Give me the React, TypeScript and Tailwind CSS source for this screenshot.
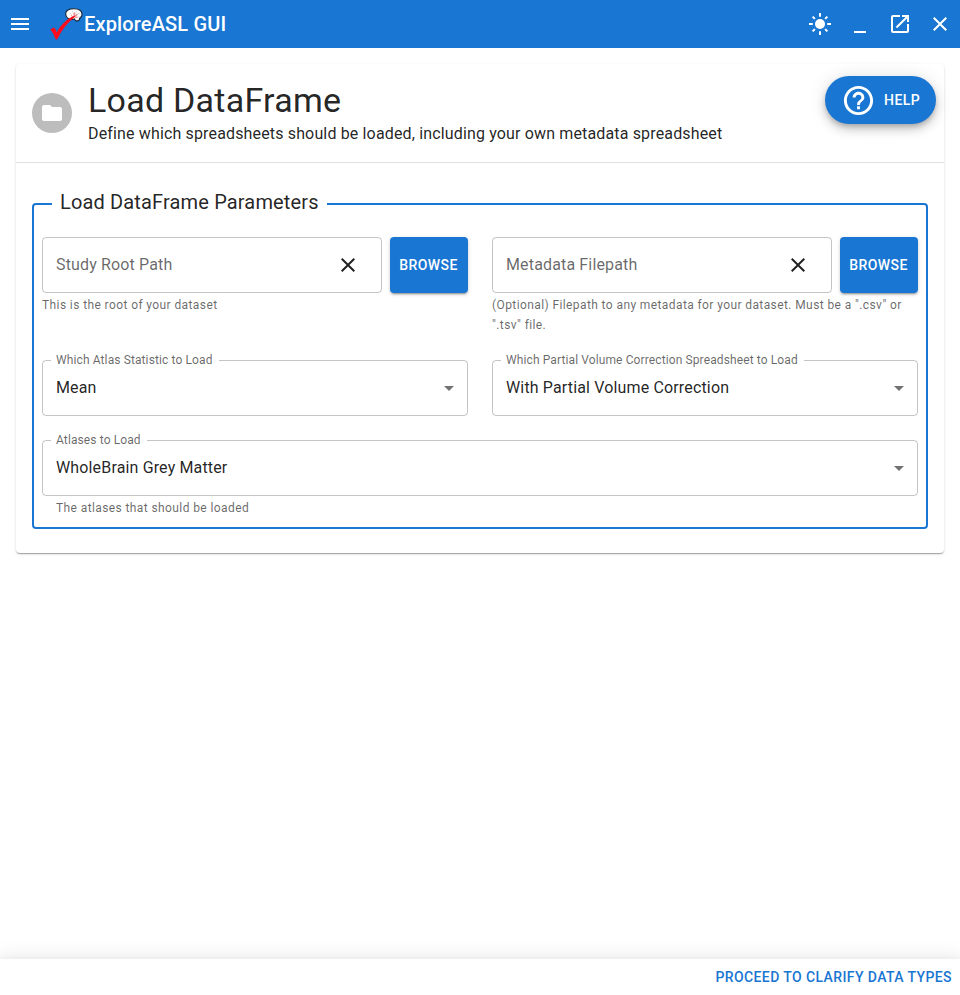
import React from "react";
import {
  MdMenu,
  MdMinimize,
  MdOpenInNew,
  MdClose,
  MdFolder,
  MdHelpOutline,
  MdArrowDropDown,
} from "react-icons/md";

function Logo() {
  return (
    <svg className="h-8 w-[34px] shrink-0" viewBox="0 0 34 32" fill="none">
      <path
        d="M15.700 5.800C15.500 2.400 19.200.8 24 .8c5 0 8.200 2 8 5.600 0 1.800-.8 2.700-1.900 3.200-.2 2-1.700 3.300-3.400 3.500-1.200-.3-1.800-1.200-2.200-2.200-2.500.8-6.200.5-7.100-1-1-.7-1.700-2.400-1.700-4.100z"
        fill="#fff"
        stroke="#16202c"
        strokeWidth="1.1"
      />
      <path d="M19 4.500l3 2M22 2.500l2 4M27 2.500l-2 4M30 5l-5 2M29 9l-4-2" stroke="#bbb" strokeWidth=".5" />
      <path d="M24 8l.4-3.500M25 8l2.500-1.500M25 9l2.500.5M22.500 8.500l-1.500-1" stroke="#e33" strokeWidth=".7" />
      <path
        d="M.2 21.600l3.600-2c1.400.9 2.300 2.800 3 4.900C10.300 17.600 16.500 11 24.600 7.600l.7.900C17.600 14.400 11.800 22 7.300 31.200c-.8.400-1.700.3-2.100-.6C4.100 27.300 2.700 24 .2 21.600z"
        fill="#fb0d1b"
      />
    </svg>
  );
}

function SunIcon({ size }: { size: number }) {
  return (
    <svg width={size} height={size} viewBox="0 0 24 24">
      <circle cx="12" cy="12" r="5" fill="currentColor" />
      <path
        d="M12 1v3.800M12 19.200V23M1 12h3.800M19.200 12H23M4.600 4.600l2.300 2.300M17.100 17.100l2.300 2.300M19.400 4.600l-2.300 2.300M6.900 17.100l-2.300 2.300"
        stroke="currentColor"
        strokeWidth="2"
      />
    </svg>
  );
}

function TopBar() {
  return (
    <header className="flex h-12 items-center bg-[#1976d2] text-white">
      <button className="flex size-10 items-center justify-center">
        <MdMenu size={24} />
      </button>
      <div className="ml-[10px] flex items-center">
        <Logo />
        <h1 className="text-xl font-medium leading-8 tracking-[0.0075em]">ExploreASL GUI</h1>
      </div>
      <div className="ml-auto flex">
        {[SunIcon, MdMinimize, MdOpenInNew, MdClose].map((Icon, i) => (
          <button key={i} className="flex size-10 items-center justify-center">
            <Icon size={24} />
          </button>
        ))}
      </div>
    </header>
  );
}

function PathField({ label, helper }: { label: string; helper: string }) {
  return (
    <div>
      <div className="flex gap-2">
        <div className="flex h-14 flex-1 items-center rounded border border-black/[0.23] pl-[13px] pr-[21px]">
          <span className="flex-1 text-base tracking-[0.00938em] text-black/60">{label}</span>
          <MdClose size={24} />
        </div>
        <button className="h-14 w-[78px] rounded bg-[#1976d2] pr-px text-sm font-medium tracking-[0.02857em] text-white shadow-[0_3px_1px_-2px_rgba(0,0,0,0.2),0_2px_2px_0_rgba(0,0,0,0.14),0_1px_5px_0_rgba(0,0,0,0.12)]">
          BROWSE
        </button>
      </div>
      <p className="mt-[2px] text-xs leading-5 tracking-[0.03333em] text-black/60">{helper}</p>
    </div>
  );
}

function SelectField({ label, value }: { label: string; value: string }) {
  return (
    <fieldset className="-mt-[9px] h-[65px] min-w-0 rounded border border-black/[0.23] pl-2 pr-[6px]">
      <legend className="h-[18px] pl-[5px] pr-[6px] text-xs leading-[18px] tracking-[0.00938em] text-black/60">
        {label}
      </legend>
      <div className="flex h-[38px] items-center pl-[5px]">
        <span className="flex-1 text-base leading-6 tracking-[0.00938em]">{value}</span>
        <MdArrowDropDown size={24} className="text-black/55" />
      </div>
    </fieldset>
  );
}

export default function App() {
  return (
    <div className="flex h-[995px] flex-col overflow-hidden bg-white font-['Roboto',sans-serif] text-black/[0.87]">
      <TopBar />
      <main className="flex-1 p-4">
        <section className="h-[489px] rounded shadow-[0_2px_1px_-1px_rgba(0,0,0,0.2),0_1px_1px_0_rgba(0,0,0,0.14),0_1px_3px_0_rgba(0,0,0,0.12)]">
          <div className="flex h-[99px] items-center border-b border-black/[0.12] px-4">
            <div className="mr-4 flex size-10 items-center justify-center rounded-full bg-[#bdbdbd] text-white">
              <MdFolder size={24} />
            </div>
            <div className="flex-1">
              <h2 className="pb-[2px] text-[34px] leading-10 tracking-[0.00735em]">Load DataFrame</h2>
              <p className="text-base leading-6 tracking-[0.00938em]">
                Define which spreadsheets should be loaded, including your own metadata spreadsheet
              </p>
            </div>
            <button className="-mr-2 mb-[26px] flex h-12 items-center rounded-full bg-[#1976d2] px-4 text-sm font-medium tracking-[0.02857em] text-white shadow-[0_3px_5px_-1px_rgba(0,0,0,0.2),0_6px_10px_0_rgba(0,0,0,0.14),0_1px_18px_0_rgba(0,0,0,0.12)]">
              <MdHelpOutline size={35} className="mr-2" />
              HELP
            </button>
          </div>
          <div className="px-4 pt-[23px]">
            <fieldset className="h-[343px] min-w-0 rounded border-2 border-[#1976d2] px-2">
              <legend className="ml-[10px] h-9 px-2 text-xl leading-8 tracking-[0.0075em]">
                Load DataFrame Parameters
              </legend>
              <div className="grid grid-cols-2 gap-x-6 pt-[15px]">
                <PathField label="Study Root Path" helper="This is the root of your dataset" />
                <PathField
                  label="Metadata Filepath"
                  helper={'(Optional) Filepath to any metadata for your dataset. Must be a ".csv" or ".tsv" file.'}
                />
              </div>
              <div className="mt-[25px] grid grid-cols-2 gap-x-6">
                <SelectField label="Which Atlas Statistic to Load" value="Mean" />
                <SelectField
                  label="Which Partial Volume Correction Spreadsheet to Load"
                  value="With Partial Volume Correction"
                />
              </div>
              <div className="mt-6">
                <SelectField label="Atlases to Load" value="WholeBrain Grey Matter" />
                <p className="mt-[2px] pl-[14px] text-xs leading-5 tracking-[0.03333em] text-black/60">
                  The atlases that should be loaded
                </p>
              </div>
            </fieldset>
          </div>
        </section>
      </main>
      <footer className="flex h-9 items-center justify-end bg-white px-2 shadow-[0_7px_8px_-4px_rgba(0,0,0,0.2),0_12px_17px_2px_rgba(0,0,0,0.14),0_5px_22px_4px_rgba(0,0,0,0.12)]">
        <button className="text-sm font-medium tracking-[0.02857em] text-[#1976d2]">PROCEED TO CLARIFY DATA TYPES</button>
      </footer>
    </div>
  );
}
